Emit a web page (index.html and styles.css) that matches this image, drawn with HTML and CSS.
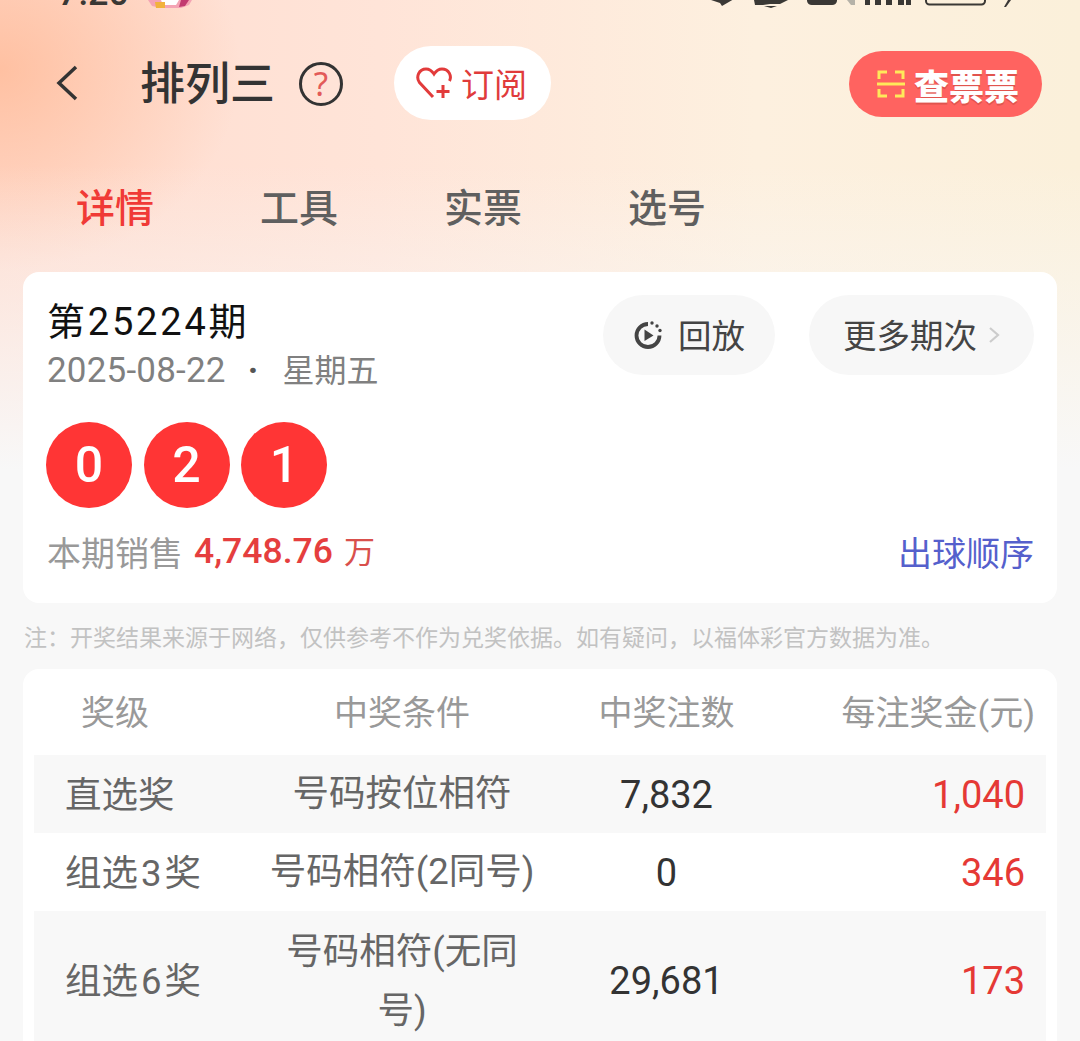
FILE: index.html
```html
<!DOCTYPE html>
<html lang="zh-CN">
<head>
<meta charset="utf-8">
<title>排列三</title>
<link rel="stylesheet" href="styles.css">
</head>
<body>
<div class="status">
  <span class="clock">7:20</span>
  <svg class="emblem" width="46" height="8" viewBox="0 0 46 8"><path d="M1 0h44l-3 5-8 3H14L5 6z" fill="#f4a4b4"/><path d="M14 0h18l-3 5H16z" fill="#fff"/><path d="M8 2h10v6H9z" fill="#f2b23c"/><path d="M34 0h8l-4 6-6 1z" fill="#c23a70"/></svg>
  <svg class="status-icons" width="310" height="9" viewBox="0 0 310 9">
    <path d="M0 0h26l-12 7-2-3z" fill="#3a3835" transform="translate(0 -1)"/>
    <path d="M46 0h34l-8 4H62l-7 1h-8zM56 6h13l-6 2z" fill="#3a3835"/>
    <path d="M99 0h30v1a5 5 0 0 1-5 4h-20a5 5 0 0 1-5-4z" fill="#3a3835"/>
    <path d="M139 0h8v5h-4z" fill="#b5b2a8"/>
    <path d="M157 0h5v5h-5zM167 0h6v5h-6zM178 0h6v5h-6zM190 0h6v5h-6zM198 0h5v5h-5z" fill="#3a3835"/>
    <path d="M218 0v1a3.500 3.500 0 0 0 3.500 3.500h52a3.500 3.500 0 0 0 3.500-3.500V0" fill="none" stroke="#3a3835" stroke-width="2"/>
    <path d="M303 0l-5 7h-2l4-7z" fill="#3a3835"/>
  </svg>
</div>

<header class="nav">
  <svg class="back" width="24" height="36" viewBox="0 0 24 36"><path d="M21 2 4 18l17 16" fill="none" stroke="#333" stroke-width="3.500"/></svg>
  <h1 class="title">排列三</h1>
  <span class="help">?</span>
  <button class="sub">
    <svg width="37" height="32" viewBox="0 0 37 32"><path d="M17 30 3.500 15.500C-.5 10 3 2 10 2c4 0 6 2 8 5 2-3 4-5 8-5 7 0 10 7 7.500 12" fill="none" stroke="#e23b3b" stroke-width="3"/><path d="M27 18v13M20.500 24.500h13" stroke="#e23b3b" stroke-width="3"/></svg>
    <span>订阅</span>
  </button>
  <button class="check">
    <svg width="28" height="28" viewBox="0 0 28 28" fill="none" stroke="#ffe95a" stroke-width="3"><path d="M10 2H2v7M18 2h8v7M2 19v7h8M26 19v7h-8"/><path d="M0 14h28"/></svg>
    <span>查票票</span>
  </button>
</header>

<nav class="tabs">
  <a class="tab active">详情</a>
  <a class="tab">工具</a>
  <a class="tab">实票</a>
  <a class="tab">选号</a>
</nav>

<section class="card draw">
  <div class="draw-top">
    <div class="draw-info">
      <div class="draw-no">第25224期</div>
      <div class="draw-date"><span>2025-08-22</span><span class="dot">·</span><span class="week">星期五</span></div>
    </div>
    <div class="draw-actions">
      <a class="pill replay">
        <svg width="30" height="30" viewBox="0 0 30 30"><path d="M15 4a11.500 11.500 0 1 0 11.500 11.500" fill="none" stroke="#444" stroke-width="3.800"/><path d="M11.500 9.500 20.500 15.500 11.500 21z" fill="#444"/><circle cx="19" cy="3" r="1.700" fill="#444"/><circle cx="24" cy="6" r="1.700" fill="#444"/><circle cx="27" cy="10.500" r="1.700" fill="#444"/></svg>
        <span class="pill-text">回放</span>
      </a>
      <a class="pill more">
        <span class="pill-text">更多期次</span>
        <svg width="12" height="18" viewBox="0 0 12 18"><path d="M2 2l8 7-8 7" fill="none" stroke="#ccc" stroke-width="2.200"/></svg>
      </a>
    </div>
  </div>
  <div class="balls">
    <span class="ball">0</span>
    <span class="ball">2</span>
    <span class="ball">1</span>
  </div>
  <div class="sales">
    <span class="sales-label">本期销售</span>
    <span class="sales-num">4,748.76</span>
    <span class="sales-unit">万</span>
    <a class="order">出球顺序</a>
  </div>
</section>

<p class="note">注&#xFF1A;开奖结果来源于网络&#xFF0C;仅供参考不作为兑奖依据。如有疑问&#xFF0C;以福体彩官方数据为准。</p>

<section class="card prizes">
  <div class="row head">
    <div class="c1">奖级</div><div class="c2">中奖条件</div><div class="c3">中奖注数</div><div class="c4">每注奖金(元)</div>
  </div>
  <div class="row odd">
    <div class="c1">直选奖</div><div class="c2">号码按位相符</div><div class="c3 num">7,832</div><div class="c4 num red">1,040</div>
  </div>
  <div class="row">
    <div class="c1">组选<span class="dg">3</span>奖</div><div class="c2">号码相符(2同号)</div><div class="c3 num">0</div><div class="c4 num red">346</div>
  </div>
  <div class="row odd tall">
    <div class="c1">组选<span class="dg">6</span>奖</div><div class="c2">号码相符(无同号)</div><div class="c3 num">29,681</div><div class="c4 num red">173</div>
  </div>
</section>
</body>
</html>
```
FILE: styles.css
```css
* { box-sizing: border-box; }
html, body { margin: 0; height: 1041px; overflow: hidden; }
body {
  font-family: Roboto, "Noto Sans CJK SC", sans-serif;
  background-color: #f8f8f8;
  background-image:
    linear-gradient(to bottom, rgba(248,248,248,0) 35%, #f8f8f8 100%),
    radial-gradient(ellipse 240px 200px at 0 70px, rgba(255,170,125,.55), rgba(255,170,125,0) 100%),
    linear-gradient(90deg, #ffdccf 0%, #ffe4d8 35%, #fdf0df 70%, #fbf0da 100%);
  background-repeat: no-repeat;
  background-size: 100% 470px;
}
.status { height: 8px; overflow: hidden; display: flex; align-items: flex-end; }
.clock { font-size: 36px; line-height: 36px; font-weight: 500; color: #3a3835; margin: 0 0 -3px 58px; flex: none; }
.emblem { margin-left: 18px; flex: none; }
.status-icons { margin-left: auto; margin-right: 62px; flex: none; align-self: flex-start; }

.nav { display: flex; align-items: center; height: 74px; margin-top: 38px; padding: 0 38px 0 55px; }
.back { flex: none; }
.title { margin: 4px 0 0 61px; font-size: 45px; line-height: 60px; font-weight: 500; color: #333; }
.help { width: 44px; height: 44px; border: 3px solid #333; border-radius: 50%; margin: 2px 0 0 24px; color: #e25a58; font-size: 33px; line-height: 38px; text-align: center; font-family: "Noto Sans", sans-serif; }
.sub { margin-left: 51px; width: 157px; height: 74px; border: 0; border-radius: 37px; background: #fff; display: flex; align-items: center; padding: 0 0 0 22px; gap: 8px; color: #e03b3b; font: inherit; font-size: 33px; }
.check { margin: 2px 0 0 auto; width: 193px; height: 66px; border: 0; border-radius: 33px; background: #ff6360; display: flex; align-items: center; padding: 0 0 0 28px; gap: 9px; color: #fff; font: inherit; font-size: 35px; font-weight: 900; text-shadow: 0 2px 0 rgba(215,80,72,.75); }

.tabs { display: grid; grid-template-columns: repeat(4, 184px); margin: 65px 0 39px 23px; height: 48px; }
.tab { font-size: 39px; line-height: 48px; text-align: center; font-weight: 500; color: #5f5f5f; }
.tab.active { color: #f03a36; }

.card { margin: 0 23px; background: #fff; border-radius: 16px; }
.draw { padding: 23px 23px 27px 24px; }
.draw-top { display: flex; justify-content: space-between; height: 80px; }
.draw-no { font-size: 38px; line-height: 48px; color: #111; letter-spacing: 2.800px; margin-top: 3px; white-space: nowrap; }
.draw-date { font-size: 35px; line-height: 44px; color: #808080; display: flex; margin-top: 3px; white-space: nowrap; letter-spacing: .2px; }
.dot { margin-left: 22px; color: #555; font-weight: 700; }
.week { margin-left: 24px; font-size: 32px; letter-spacing: 0; }
.draw-actions { display: flex; gap: 34px; }
.pill { display: flex; align-items: center; justify-content: center; height: 80px; border-radius: 40px; background: #f7f7f7; color: #444; font-size: 33.500px; }
.pill-text { margin-top: -4px; }
.replay { width: 172px; gap: 15px; }
.more { width: 225px; gap: 11px; }

.balls { display: flex; gap: 11.500px; margin: 47px 0 0 -1px; }
.ball { width: 86px; height: 86px; border-radius: 50%; background: #ff3535; color: #fff; font-size: 50px; font-weight: 500; line-height: 86px; text-align: center; }

.sales { display: flex; align-items: center; height: 48px; margin-top: 19px; margin-bottom: 1px; }
.sales-label { font-size: 34px; color: #999; }
.sales-num { font-size: 35.500px; font-weight: 500; color: #e53e3e; margin-left: 11px; }
.sales-unit { font-size: 31px; color: #d9504c; margin-left: 11px; margin-top: -4px; }
.order { margin-left: auto; font-size: 34px; color: #5560cc; }

.note { margin: 0; height: 66px; padding-left: 24px; display: flex; align-items: center; font-size: 23px; color: #c2c2c2; white-space: nowrap; font-family: "Noto Sans CJK SC", sans-serif; }

.prizes { padding: 0 11px; height: 500px; }
.row { display: grid; grid-template-columns: 232px 272px 257px 251px; align-items: center; height: 78px; padding-top: 2px; font-size: 36.500px; line-height: 59px; color: #666; text-align: center; }
.row.head { height: 86px; font-size: 34px; color: #999; }
.row.odd { background: #f8f8f8; }
.row.tall { height: 138px; }
.row .c1 { text-align: left; padding-left: 31px; }
.row .c2 { margin-bottom: 4px; }
.row.head .c2, .row.tall .c2 { margin-bottom: 0; }
.dg { margin: 0 3px; }
.row.head .c1 { padding-left: 47px; }
.row .c4 { text-align: right; padding-right: 21px; }
.row.head .c4 { padding-right: 11px; white-space: nowrap; }
.num { font-size: 38px; color: #333; }
.red { color: #e53935; }
```
